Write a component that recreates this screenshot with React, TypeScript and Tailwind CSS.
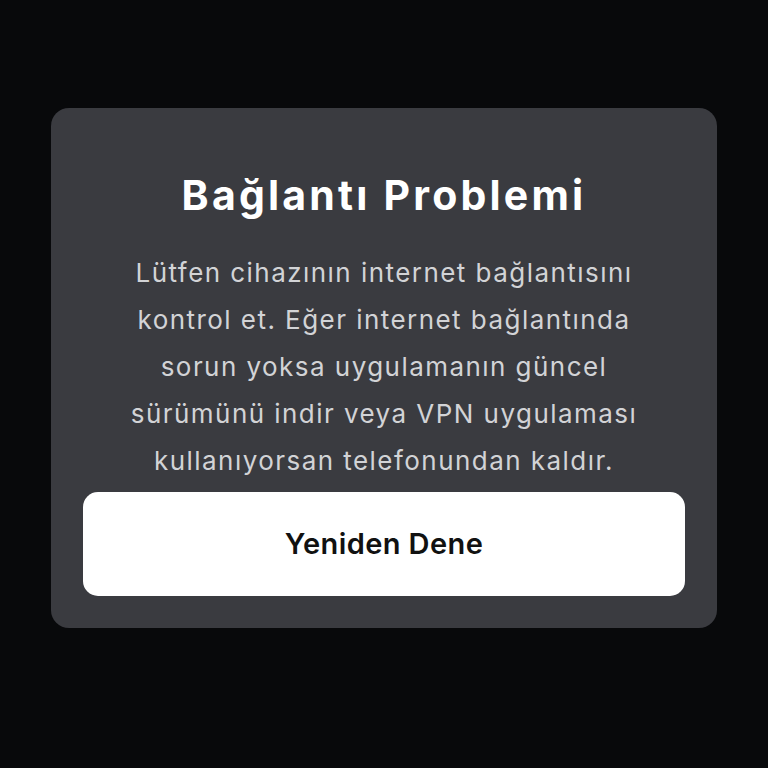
export default function App() {
  return (
    <div
      className="min-h-screen w-full bg-[#08090b] pt-[108px]"
      style={{ fontFamily: "Inter, 'Noto Sans', sans-serif" }}
    >
      <div className="mx-auto w-[666px] rounded-[18px] bg-[#3a3b40] px-8 pt-[63px] pb-8">
        <h1 className="text-center text-[41px] leading-[48px] font-bold tracking-[3.2px] text-white">
          Bağlantı Problemi
        </h1>
        <p className="mt-[30px] text-center text-[26px] leading-[47px] tracking-[1.45px] text-[#d2d3d6]">
          Lütfen cihazının internet bağlantısını
          <br />
          kontrol et. Eğer internet bağlantında
          <br />
          sorun yoksa uygulamanın güncel
          <br />
          sürümünü indir veya VPN uygulaması
          <br />
          kullanıyorsan telefonundan kaldır.
        </p>
        <button className="mt-2 flex h-[104px] w-full items-center justify-center rounded-[15px] bg-white text-[29px] font-semibold tracking-[0.4px] text-[#111111]">
          Yeniden Dene
        </button>
      </div>
    </div>
  );
}
